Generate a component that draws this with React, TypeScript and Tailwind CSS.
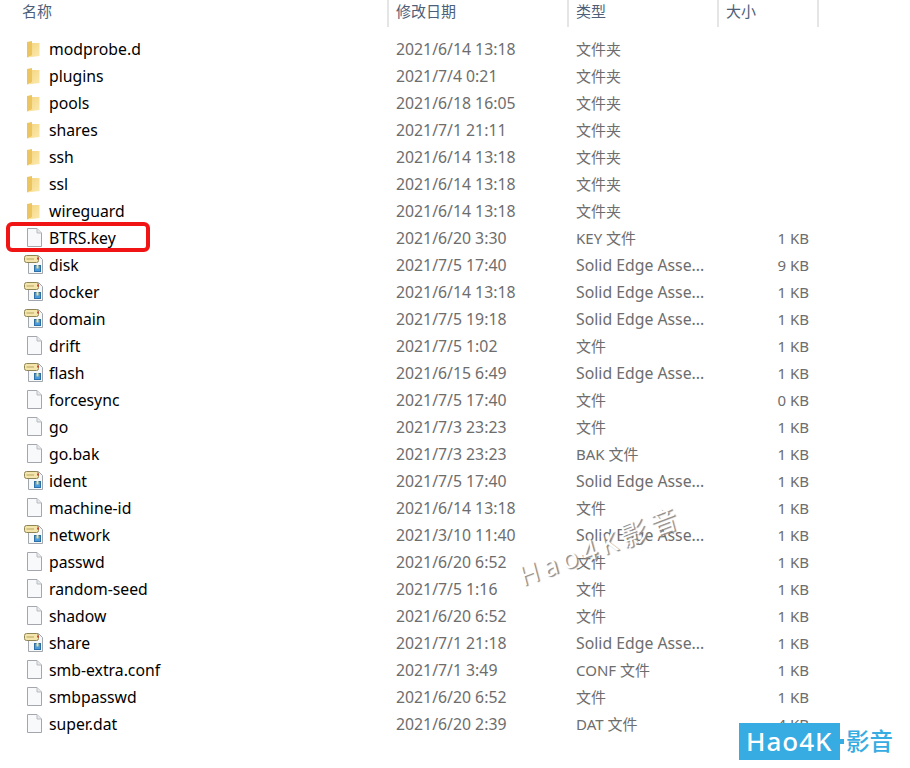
const files = [
  { name: "modprobe.d", date: "2021/6/14 13:18", type: "文件夹", size: "", icon: "folder" },
  { name: "plugins", date: "2021/7/4 0:21", type: "文件夹", size: "", icon: "folder" },
  { name: "pools", date: "2021/6/18 16:05", type: "文件夹", size: "", icon: "folder" },
  { name: "shares", date: "2021/7/1 21:11", type: "文件夹", size: "", icon: "folder" },
  { name: "ssh", date: "2021/6/14 13:18", type: "文件夹", size: "", icon: "folder" },
  { name: "ssl", date: "2021/6/14 13:18", type: "文件夹", size: "", icon: "folder" },
  { name: "wireguard", date: "2021/6/14 13:18", type: "文件夹", size: "", icon: "folder" },
  { name: "BTRS.key", date: "2021/6/20 3:30", type: "KEY 文件", size: "1 KB", icon: "file" },
  { name: "disk", date: "2021/7/5 17:40", type: "Solid Edge Asse...", size: "9 KB", icon: "asset" },
  { name: "docker", date: "2021/6/14 13:18", type: "Solid Edge Asse...", size: "1 KB", icon: "asset" },
  { name: "domain", date: "2021/7/5 19:18", type: "Solid Edge Asse...", size: "1 KB", icon: "asset" },
  { name: "drift", date: "2021/7/5 1:02", type: "文件", size: "1 KB", icon: "file" },
  { name: "flash", date: "2021/6/15 6:49", type: "Solid Edge Asse...", size: "1 KB", icon: "asset" },
  { name: "forcesync", date: "2021/7/5 17:40", type: "文件", size: "0 KB", icon: "file" },
  { name: "go", date: "2021/7/3 23:23", type: "文件", size: "1 KB", icon: "file" },
  { name: "go.bak", date: "2021/7/3 23:23", type: "BAK 文件", size: "1 KB", icon: "file" },
  { name: "ident", date: "2021/7/5 17:40", type: "Solid Edge Asse...", size: "1 KB", icon: "asset" },
  { name: "machine-id", date: "2021/6/14 13:18", type: "文件", size: "1 KB", icon: "file" },
  { name: "network", date: "2021/3/10 11:40", type: "Solid Edge Asse...", size: "1 KB", icon: "asset" },
  { name: "passwd", date: "2021/6/20 6:52", type: "文件", size: "1 KB", icon: "file" },
  { name: "random-seed", date: "2021/7/5 1:16", type: "文件", size: "1 KB", icon: "file" },
  { name: "shadow", date: "2021/6/20 6:52", type: "文件", size: "1 KB", icon: "file" },
  { name: "share", date: "2021/7/1 21:18", type: "Solid Edge Asse...", size: "1 KB", icon: "asset" },
  { name: "smb-extra.conf", date: "2021/7/1 3:49", type: "CONF 文件", size: "1 KB", icon: "file" },
  { name: "smbpasswd", date: "2021/6/20 6:52", type: "文件", size: "1 KB", icon: "file" },
  { name: "super.dat", date: "2021/6/20 2:39", type: "DAT 文件", size: "4 KB", icon: "file" },
];

function FolderIcon() {
  return (
    <svg width="13" height="18" viewBox="0 0 13 18" className="ml-[5px] mb-[2px]">
      <defs>
        <linearGradient id="fold" x1="0" y1="0" x2="1" y2="1">
          <stop offset="0" stopColor="#f3d47c" />
          <stop offset="1" stopColor="#fce9ad" />
        </linearGradient>
      </defs>
      <path d="M0 2 L5 1 L5 15.5 L0 17.5 Z" fill="#edc560" />
      <path d="M5 3 L12.5 3 L12.5 16 L0 17.5 L5 15.5 Z" fill="url(#fold)" />
    </svg>
  );
}

function FileIcon() {
  return (
    <svg width="15" height="19" viewBox="0 0 15 19" className="ml-[5px] mb-[2px]">
      <path d="M0.5 0.5 H10 L14.5 5 V18.5 H0.5 Z" fill="#f8f9fa" stroke="#a3a7ad" />
      <path d="M10 0.5 V5 H14.5" fill="#e6e8eb" stroke="#b8bcc1" />
    </svg>
  );
}

function AssetIcon() {
  return (
    <svg width="20" height="20" viewBox="0 0 20 20" className="ml-[2px] mb-[4px]">
      <path d="M4.5 1.5 H14.5 L18.5 5.5 V19.5 H4.5 Z" fill="#f7f8f9" stroke="#a2a7ad" />
      <rect x="0.5" y="1.5" width="14" height="7" rx="2" fill="#f3e5ac" stroke="#8f8454" />
      <path d="M2.5 5 H10" stroke="#b7a662" />
      <rect x="13" y="3.5" width="2" height="2" fill="#d0453b" />
      <rect x="10.5" y="11.5" width="6" height="6" fill="#4a9bdc" stroke="#2b6fa8" />
      <rect x="12.5" y="11" width="2" height="3.5" fill="#f4e08a" />
    </svg>
  );
}

function RowIcon({ kind }: { kind: string }) {
  if (kind === "folder") return <FolderIcon />;
  if (kind === "asset") return <AssetIcon />;
  return <FileIcon />;
}

export default function App() {
  return (
    <div
      className="relative w-[910px] h-[768px] overflow-hidden bg-white text-[16px]"
      style={{ fontFamily: '"Noto Sans", "Noto Sans CJK SC", sans-serif' }}
    >
      <div className="flex h-[27px] text-[#4c607a] text-[15px]">
        <div className="w-[389px] pl-[22px] leading-[22px] border-r-2 border-[#e5e5e5]">名称</div>
        <div className="w-[180px] pl-[7px] leading-[22px] border-r-2 border-[#e5e5e5]">修改日期</div>
        <div className="w-[150px] pl-[7px] leading-[22px] border-r-2 border-[#e5e5e5]">类型</div>
        <div className="w-[100px] pl-[7px] leading-[22px] border-r-2 border-[#e5e5e5]">大小</div>
      </div>

      <div className="pt-[9px]">
        {files.map((f) => (
          <div key={f.name} className="flex items-center h-[27px]">
            <div className="w-[388px] flex items-center pl-[22px]">
              <div className="w-[27px] flex justify-start">
                <RowIcon kind={f.icon} />
              </div>
              <span className="text-[15.75px] leading-[24px] mb-[0.5px] text-[#000000] whitespace-nowrap">{f.name}</span>
            </div>
            <div className="w-[180px] pl-[8px] text-[#6d6d6d] whitespace-nowrap text-[15.8px]">{f.date}</div>
            <div
              className={
                f.type.startsWith("Solid")
                  ? "w-[150px] pl-[8px] text-[#6d6d6d] whitespace-nowrap text-[15.8px]"
                  : "w-[150px] pl-[8px] text-[#6d6d6d] whitespace-nowrap text-[15px]"
              }
            >
              {f.type}
            </div>
            <div className="w-[91px] text-right text-[#6d6d6d] whitespace-nowrap text-[15px]">{f.size}</div>
          </div>
        ))}
      </div>

      {/* red mark round BTRS.key */}
      <div className="absolute left-[6px] top-[222px] w-[144px] h-[30px] rounded-[6px] border-[4px] border-[#f01414]" />

      {/* watermark */}
      <div
        className="absolute left-[514px] top-[526px] text-[27px] text-white whitespace-nowrap -rotate-[21deg] tracking-[5px] -skew-x-6"
        style={{ textShadow: "1.5px 1.5px 1px #8a8a8a" }}
      >
        Hao4K影音
      </div>

      {/* logo */}
      <div className="absolute left-[739px] top-[723px] flex items-center">
        <div className="w-[101px] h-[37px] bg-[#36ace2] text-white text-[26px] font-medium tracking-[1px] leading-[37px] pl-[7px] whitespace-nowrap">
          Hao4K
        </div>
        <div className="w-[7px] h-[5px] bg-[#36ace2] -ml-[3px]" />
        <div className="ml-[2px] text-[#36ace2] text-[23.5px] font-medium whitespace-nowrap">影音</div>
      </div>
    </div>
  );
}
